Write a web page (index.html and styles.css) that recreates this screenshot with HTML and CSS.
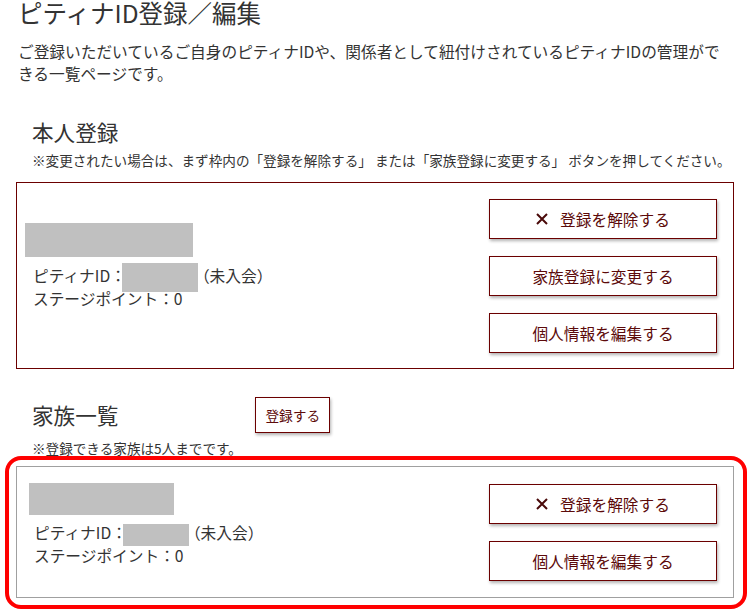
FILE: index.html
```html
<!DOCTYPE html>
<html>
    <head>
        <title>ピティナID登録／編集</title>

        <link rel="stylesheet" href="styles.css">
    </head>
    <body>
        <div class="container">
            <h1>ピティナID登録／編集</h1>
            <p class="lead">ご登録いただいているご自身のピティナIDや、関係者として紐付けされているピティナIDの管理ができる一覧ページです。</p>

            <div class="section-head self-head">
                <h2>本人登録</h2>
            </div>
            <p class="note">※変更されたい場合は、まず枠内の「登録を解除する」 または「家族登録に変更する」 ボタンを押してください。</p>

            <div class="member self">
                <div class="info">
                    <div class="name-mask"></div>
                    <div class="line">ピティナID：<span class="id-mask"></span>（未入会）</div>
                    <div class="line">ステージポイント：0</div>
                </div>
                <div class="actions">
                    <button class="btn">
                        <svg class="icon-x" width="12" height="12" viewBox="0 0 12 12">
                            <path d="M1 1 L11 11 M11 1 L1 11" stroke="#4a0a0a" stroke-width="2" fill="none"/>
                        </svg>
                        登録を解除する
                    </button>
                    <button class="btn">家族登録に変更する</button>
                    <button class="btn">個人情報を編集する</button>
                </div>
            </div>

            <div class="section-head family-head">
                <h2>家族一覧</h2>
                <button class="btn-small">登録する</button>
            </div>
            <p class="note family-note">※登録できる家族は5人までです。</p>

            <div class="highlight">
                <div class="member family">
                    <div class="info">
                        <div class="name-mask"></div>
                        <div class="line">ピティナID：<span class="id-mask"></span>（未入会）</div>
                        <div class="line">ステージポイント：0</div>
                    </div>
                    <div class="actions">
                        <button class="btn">
                            <svg class="icon-x" width="12" height="12" viewBox="0 0 12 12">
                                <path d="M1 1 L11 11 M11 1 L1 11" stroke="#4a0a0a" stroke-width="2" fill="none"/>
                            </svg>
                            登録を解除する
                        </button>
                        <button class="btn">個人情報を編集する</button>
                    </div>
                </div>
            </div>
        </div>
    </body>
</html>
```

FILE: styles.css
```css
body {
    font-family: "Noto Sans CJK JP", "Noto Sans", sans-serif;
    margin: 0;
    padding: 0;
    color: #333;
    background: #fff;
}

button {
    font-family: inherit;
    cursor: pointer;
}

.container {
    padding: 0 16px;
}

h1 {
    margin: 0;
    padding-left: 2px;
    font-size: 24.5px;
    line-height: 26px;
    font-weight: normal;
}

h2 {
    margin: 0;
    font-size: 21.6px;
    line-height: 28px;
    font-weight: normal;
}

.lead {
    margin: 15px 0 0;
    padding-left: 2px;
    font-size: 15.7px;
    line-height: 22px;
}

.section-head {
    display: flex;
    align-items: center;
    padding-left: 16px;
}

.self-head {
    margin-top: 33px;
}

.family-head {
    margin-top: 28px;
    gap: 137px;
}

.note {
    margin: 4px 0 12px;
    padding-left: 16px;
    font-size: 13.6px;
    line-height: 20px;
    white-space: nowrap;
}

.family-note {
    margin: 6px 0 -1px;
    line-height: 18px;
}

.member {
    display: flex;
    justify-content: space-between;
    align-items: flex-start;
    border: 1px solid #6b0000;
    padding: 16px 16px 15px 8px;
    background: #fff;
}

.member.family {
    border-color: #a0a0a0;
    padding: 17px 16px 16px 12px;
}

.info {
    padding-top: 24px;
}

.family .info {
    padding-top: 0;
    margin-top: -1px;
}

.name-mask {
    width: 168px;
    height: 34px;
    background: #c0c0c0;
}

.family .name-mask {
    width: 145px;
    height: 32px;
}

.line {
    padding-left: 8px;
    font-size: 15.7px;
    line-height: 22px;
}

.name-mask + .line {
    margin-top: 8px;
}

.family .line {
    padding-left: 5px;
}

.family .name-mask + .line {
    margin-top: 7px;
}

.id-mask {
    display: inline-block;
    width: 76px;
    height: 29px;
    margin: -4px -4px -4px -4px;
    vertical-align: middle;
    background: #c0c0c0;
}

.family .id-mask {
    width: 66px;
    height: 22px;
    margin: -1px -4px -1px -4px;
}

.actions {
    display: flex;
    flex-direction: column;
    gap: 17px;
}

.btn {
    display: flex;
    justify-content: center;
    align-items: center;
    gap: 12px;
    width: 228px;
    height: 40px;
    padding: 0;
    border: 1px solid #6b0000;
    background: #fff;
    color: #5c0a0a;
    font-size: 15.7px;
    box-shadow: 1px 2px 3px rgba(0, 0, 0, 0.3);
}

.icon-x {
    flex: none;
}

.btn-small {
    height: 36px;
    padding: 0 9px;
    border: 1px solid #6b0000;
    background: #fff;
    color: #5c0a0a;
    font-size: 13.7px;
    box-shadow: 1px 2px 3px rgba(0, 0, 0, 0.3);
}

.highlight {
    margin: 0 -13px 0 -11px;
    padding: 6px 9px 7px 7px;
    border: 4px solid #f00;
    border-radius: 16px;
}
```
